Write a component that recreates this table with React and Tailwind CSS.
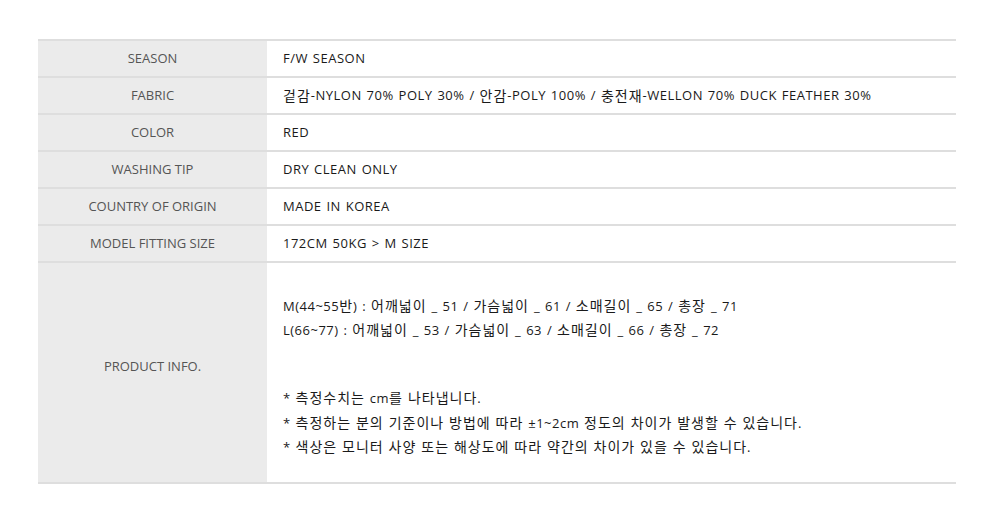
import React from 'react';

const rows = [
  ['SEASON', 'F/W SEASON'],
  ['FABRIC', '겉감-NYLON 70% POLY 30% / 안감-POLY 100% / 충전재-WELLON 70% DUCK FEATHER 30%'],
  ['COLOR', 'RED'],
  ['WASHING TIP', 'DRY CLEAN ONLY'],
  ['COUNTRY OF ORIGIN', 'MADE IN KOREA'],
  ['MODEL FITTING SIZE', '172CM 50KG > M SIZE'],
];

const sizes = [
  'M(44~55반) : 어깨넓이 _ 51 / 가슴넓이 _ 61 / 소매길이 _ 65 / 총장 _ 71',
  'L(66~77) : 어깨넓이 _ 53 / 가슴넓이 _ 63 / 소매길이 _ 66 / 총장 _ 72',
];

const notes = [
  '* 측정수치는 cm를 나타냅니다.',
  '* 측정하는 분의 기준이나 방법에 따라 ±1~2cm 정도의 차이가 발생할 수 있습니다.',
  '* 색상은 모니터 사양 또는 해상도에 따라 약간의 차이가 있을 수 있습니다.',
];

// hangul is set a bit larger than latin, like the original web font
function Txt({ children }) {
  const parts = children.split(/([\uAC00-\uD7A3]+)/);
  return (
    <>
      {parts.map((p, i) =>
        /[\uAC00-\uD7A3]/.test(p) ? (
          <span key={i} className="text-[14px] tracking-[1px]">{p}</span>
        ) : (
          <span key={i}>{p}</span>
        )
      )}
    </>
  );
}

export default function App() {
  return (
    <div
      className="w-[1000px] h-[527px] bg-white pt-[39px] pl-[38px]"
      style={{ fontFamily: '"Open Sans", "Noto Sans CJK KR", sans-serif' }}
    >
      <div className="w-[918px] border-t-2 border-[#dedede] text-[13px]">
        {rows.map(([label, value]) => (
          <div key={label} className="flex h-[37px] border-b-2 border-[#dedede]">
            <div className="w-[229px] bg-[#ebebeb] flex items-center justify-center text-[#555]">
              {label}
            </div>
            <div className="flex-1 flex items-center pl-[16px] text-[#1a1a1a] tracking-[0.5px] [word-spacing:1px] whitespace-pre">
              <Txt>{value}</Txt>
            </div>
          </div>
        ))}
        <div className="flex h-[221px] border-b-2 border-[#dedede]">
          <div className="w-[229px] bg-[#ebebeb] flex items-center justify-center pb-[12px] text-[#555]">
            PRODUCT INFO.
          </div>
          <div className="flex-1 pl-[16px] pt-[31px] text-[#1a1a1a] leading-[24px] tracking-[0.5px] [word-spacing:1px] whitespace-pre">
            {sizes.map((s) => (
              <div key={s}><Txt>{s}</Txt></div>
            ))}
            <div className="mt-[44px]">
              {notes.map((n) => (
                <div key={n} className="leading-[24.5px]"><Txt>{n}</Txt></div>
              ))}
            </div>
          </div>
        </div>
      </div>
    </div>
  );
}
